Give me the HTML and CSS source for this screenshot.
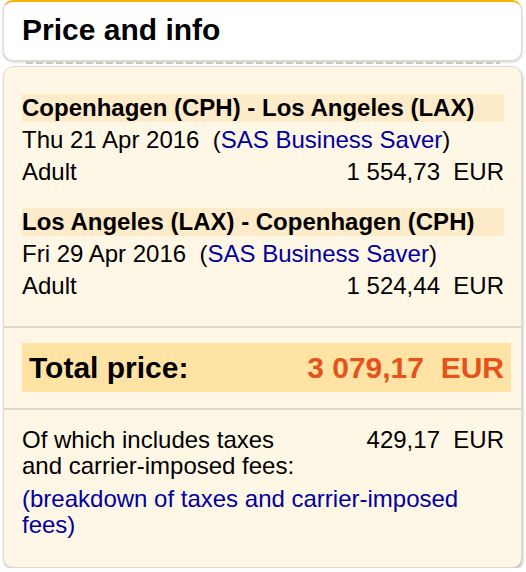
FILE: index.html
```html
<!DOCTYPE html>
<html lang="en">
<head>
<meta charset="utf-8">
<title>Price and info</title>
<link rel="stylesheet" href="styles.css">
</head>
<body>
<div class="card">
  <div class="header">
    <h1 class="title">Price and info</h1>
  </div>
  <div class="tear"></div>
  <div class="panel">
    <div class="flights">
      <div class="leg">
        <div class="route">Copenhagen (CPH) - Los Angeles (LAX)</div>
        <div class="row"><span class="date">Thu 21 Apr 2016  (<a class="link" href="#">SAS Business Saver</a>)</span></div>
        <div class="row"><span>Adult</span><span class="amount">1 554,73  EUR</span></div>
      </div>
      <div class="leg">
        <div class="route">Los Angeles (LAX) - Copenhagen (CPH)</div>
        <div class="row"><span class="date">Fri 29 Apr 2016  (<a class="link" href="#">SAS Business Saver</a>)</span></div>
        <div class="row"><span>Adult</span><span class="amount">1 524,44  EUR</span></div>
      </div>
    </div>
    <div class="sep"></div>
    <div class="total">
      <span class="total-label">Total price:</span>
      <span class="total-amount">3 079,17  EUR</span>
    </div>
    <div class="sep sep-low"></div>
    <div class="taxes">
      <div class="tax-row">
        <span class="tax-label">Of which includes taxes and carrier-imposed fees:</span>
        <span class="amount">429,17  EUR</span>
      </div>
      <a class="link breakdown" href="#">(breakdown of taxes and carrier-imposed fees)</a>
    </div>
  </div>
</div>
</body>
</html>
```

FILE: styles.css
```css
html, body {
  margin: 0;
  padding: 0;
  background: #ffffff;
}

body {
  font-family: "Liberation Sans", Arial, Helvetica, sans-serif;
  color: #000;
  font-size: 24px;
}

.card {
  width: 519px;
  margin-left: 3px;
}

.header {
  background: #ffffff;
  border: 1px solid #dedad2;
  border-top: 2px solid #f8b400;
  border-radius: 10px;
  padding: 11px 18px 13px 18px;
  box-shadow: 0 1px 3px rgba(0, 0, 0, 0.22);
}

.title {
  margin: 0;
  font-size: 30px;
  line-height: 34px;
  font-weight: bold;
}

.tear {
  height: 2px;
  margin: 1px 22px 2px 23px;
  background: repeating-linear-gradient(90deg, #c9c6c0 0 7px, transparent 7px 10px);
}

.panel {
  background: #fef7e6;
  border: 1px solid #dedad2;
  border-radius: 10px;
  padding: 27px 17px 29px 18px;
  box-shadow: 1px 2px 3px rgba(0, 0, 0, 0.25);
}

.flights {
  display: flex;
  flex-direction: column;
  gap: 20px;
}

.route {
  background: #fdebc9;
  font-weight: bold;
  height: 28px;
  line-height: 28px;
  margin-bottom: 2px;
  white-space: nowrap;
}

.row {
  display: flex;
  justify-content: space-between;
  line-height: 32px;
}

.date,
.amount,
.total-amount {
  white-space: pre;
}

.link {
  color: #00009e;
  text-decoration: none;
}

.sep {
  height: 2px;
  background: #e0d8c8;
  margin: 24px -17px 15px -18px;
}

.sep-low {
  margin: 16px -17px 17px -18px;
}

.total {
  display: flex;
  justify-content: space-between;
  align-items: center;
  background: #fee3a5;
  height: 49px;
  padding: 0 7px;
  margin-right: -7px;
  font-size: 30px;
  line-height: 34px;
  font-weight: bold;
}

.total-amount {
  color: #e6531a;
}

.taxes {
  display: flex;
  flex-direction: column;
  gap: 7px;
  line-height: 26px;
}

.tax-row {
  display: flex;
  justify-content: space-between;
  align-items: flex-start;
}

.tax-label {
  width: 280px;
}

.breakdown {
  display: block;
}
```
